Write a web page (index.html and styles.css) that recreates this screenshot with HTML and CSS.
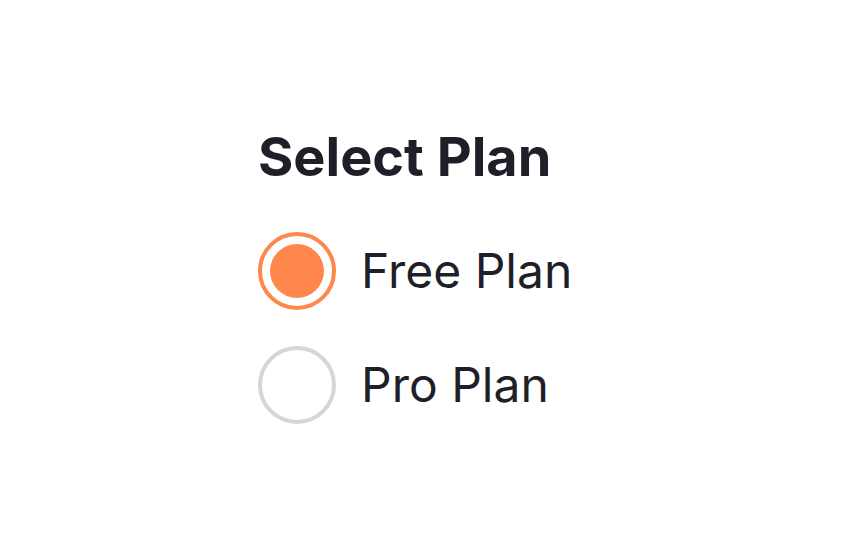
FILE: index.html
```html
<!DOCTYPE html>
<html lang="en">
<head>
    <meta charset="UTF-8">
    <meta name="viewport" content="width=device-width, initial-scale=1.0">
    <title>Select Plan</title>
    <link rel="stylesheet" href="styles.css">
</head>
<body>
    <div class="container">
        <h1>Select Plan</h1>

        <div class="radio-group">
            <label class="radio-option">
                <input type="radio" name="plan" value="free" checked>
                <span class="radio-circle"></span>
                <span class="radio-label">Free Plan</span>
            </label>
            <label class="radio-option">
                <input type="radio" name="plan" value="pro">
                <span class="radio-circle"></span>
                <span class="radio-label">Pro Plan</span>
            </label>
        </div>
    </div>
</body>
</html>
```

FILE: styles.css
```css
body {
    font-family: Inter, 'Noto Sans', sans-serif;
    margin: 0;
    background-color: #ffffff;
    color: #1f1f29;
}
.container {
    padding: 124px 0 0 258px;
}
h1 {
    font-size: 54px;
    font-weight: 700;
    margin: 0 0 42px 0;
    line-height: 66px;
}
.radio-group {
    display: flex;
    flex-direction: column;
    gap: 36px;
}
.radio-option {
    display: flex;
    align-items: center;
    gap: 25px;
    cursor: pointer;
}
.radio-option input {
    display: none;
}
.radio-circle {
    box-sizing: border-box;
    width: 78px;
    height: 78px;
    border-radius: 50%;
    border: 4px solid #d6d6d6;
    display: flex;
    align-items: center;
    justify-content: center;
}
.radio-option input:checked + .radio-circle {
    border-color: #ff874c;
}
.radio-option input:checked + .radio-circle::after {
    content: "";
    width: 54px;
    height: 54px;
    border-radius: 50%;
    background-color: #ff874c;
}
.radio-label {
    font-size: 48px;
    line-height: 56px;
}
```
